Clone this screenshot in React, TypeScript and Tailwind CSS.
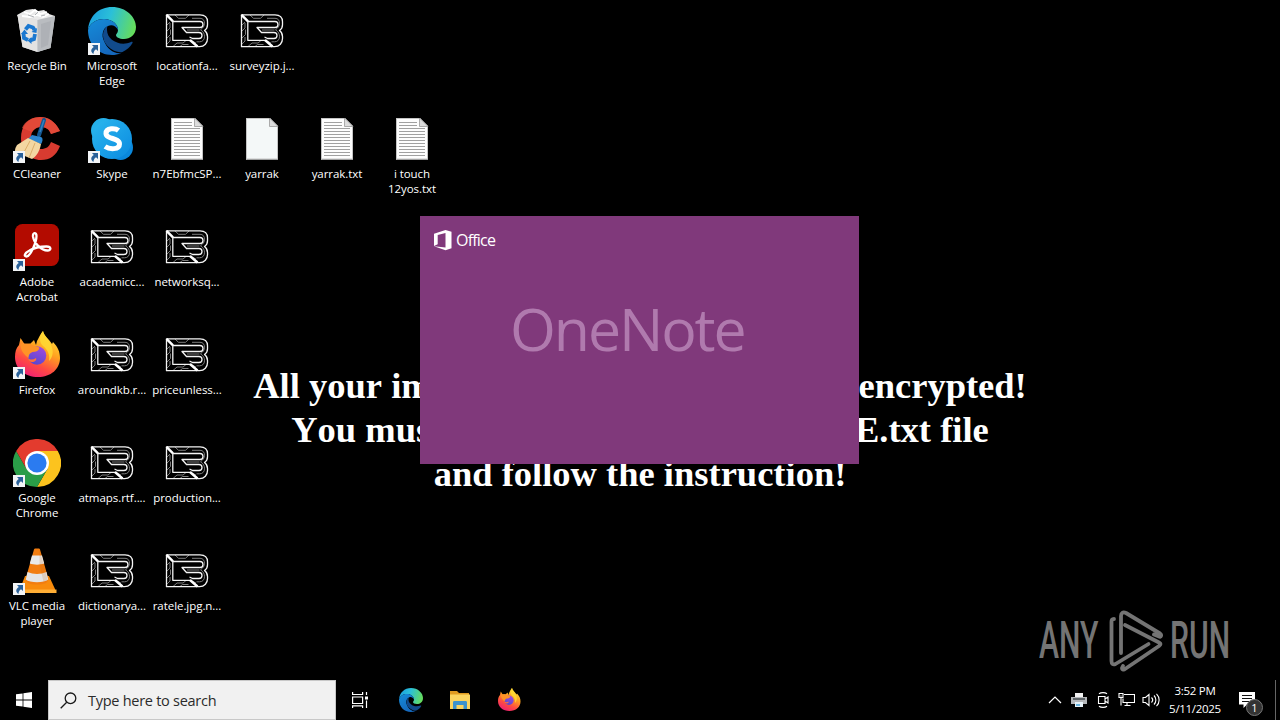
import React from "react";

type IconKind =
  | "bin" | "edge" | "lock" | "ccleaner" | "skype" | "text" | "blank"
  | "acrobat" | "firefox" | "chrome" | "vlc";

type DesktopItem = {
  icon: IconKind;
  label: string[];
  shortcut?: boolean;
};

const rows: DesktopItem[][] = [
  [
    { icon: "bin", label: ["Recycle Bin"] },
    { icon: "edge", label: ["Microsoft", "Edge"], shortcut: true },
    { icon: "lock", label: ["locationfa..."] },
    { icon: "lock", label: ["surveyzip.j..."] },
  ],
  [
    { icon: "ccleaner", label: ["CCleaner"], shortcut: true },
    { icon: "skype", label: ["Skype"], shortcut: true },
    { icon: "text", label: ["n7EbfmcSP..."] },
    { icon: "blank", label: ["yarrak"] },
    { icon: "text", label: ["yarrak.txt"] },
    { icon: "text", label: ["i touch", "12yos.txt"] },
  ],
  [
    { icon: "acrobat", label: ["Adobe", "Acrobat"], shortcut: true },
    { icon: "lock", label: ["academicc..."] },
    { icon: "lock", label: ["networksq..."] },
  ],
  [
    { icon: "firefox", label: ["Firefox"], shortcut: true },
    { icon: "lock", label: ["aroundkb.r..."] },
    { icon: "lock", label: ["priceunless..."] },
  ],
  [
    { icon: "chrome", label: ["Google", "Chrome"], shortcut: true },
    { icon: "lock", label: ["atmaps.rtf...."] },
    { icon: "lock", label: ["production..."] },
  ],
  [
    { icon: "vlc", label: ["VLC media", "player"], shortcut: true },
    { icon: "lock", label: ["dictionarya..."] },
    { icon: "lock", label: ["ratele.jpg.n..."] },
  ],
];

const BinIcon = () => (
  <svg viewBox="0 0 48 48" className="size-12">
    <path d="M4 8l9-5 7-1 5 2 6-1 5 4 6 2-4 6H8z" fill="#e9e9e9" />
    <path d="M4.500 8l20 5 17.500-4-4.500 32-13 4-15-5z" fill="#d3d6d9" />
    <path d="M4.500 8l20 5v32l-15-5z" fill="#e4e3e2" />
    <path d="M24.500 13L42 9l-4.500 32-13 4z" fill="#b9bcc0" />
    <path d="M28 17l10-3-3 24-7 3z" fill="#a6aaaf" opacity=".6" />
    <path d="M11 5l6 2 5-4 5 4 7-2M9 9l8 1 7-2 6 2 6-3" fill="none" stroke="#fff" strokeWidth="1.800" />
    <path d="M15 8l6 2M25 5l-3 3M32 8l-4 1" stroke="#aeb1b5" />
    <path d="M12.500 22.500l3-3.500 4.500 1.500 1.500 2.500M10.500 26l.5 5 4 2M22 27l-1 5-4 1.500" fill="none" stroke="#1b78d0" strokeWidth="3.800" />
    <path d="M18.500 25l5 1 .5-5zM8 27l3.500-4.500L15 27zM18.500 30v7l-4-3.500z" fill="#1b78d0" />
  </svg>
);

const EdgeIcon = ({ className }: { className: string }) => (
  <svg viewBox="0 0 48 48" className={className}>
    <defs>
      <linearGradient id="edgeTop" x1="0" y1=".3" x2="1" y2=".5">
        <stop offset="0" stopColor="#1a9fe0" />
        <stop offset=".45" stopColor="#2bc0d8" />
        <stop offset="1" stopColor="#66dd5c" />
      </linearGradient>
      <linearGradient id="edgeLeft" x1="0" y1="0" x2=".5" y2="1">
        <stop offset="0" stopColor="#158cd9" />
        <stop offset="1" stopColor="#1568bd" />
      </linearGradient>
    </defs>
    <path d="M0 23C1 9 11 0 24 0c14 0 24 10 24 20 0 8-6 12-12 12-5 0-8-2-8-4 0-1 2-2 2-5 0-6-6-11-14-11C8 12 2 16 0 23z" fill="url(#edgeTop)" />
    <path d="M0 23C2 16 8 12 16 12c8 0 14 5 14 11-2-4-6-6-10-4-5 2-7 9-4 15 3 8 10 13 17 12-3 1.500-6 2-9 2C10 48 0 37 0 23z" fill="url(#edgeLeft)" />
    <path d="M19.500 19c-6 4-6 14 0 20 5 5 11 7 15 6 4-2 8-5 10-9 .5-1-.5-1.500-1.500-1C32 40 19 33 19 23c0-1.500 0-2.500.5-4z" fill="#114a8b" />
  </svg>
);

const FirefoxIcon = ({ className }: { className: string }) => (
  <svg viewBox="0 0 48 48" className={className}>
    <defs>
      <linearGradient id="foxBody" x1=".8" y1="0" x2=".3" y2="1">
        <stop offset="0" stopColor="#ffe843" />
        <stop offset=".4" stopColor="#ffa21f" />
        <stop offset=".72" stopColor="#ff4a42" />
        <stop offset="1" stopColor="#ee1f74" />
      </linearGradient>
      <linearGradient id="foxGlobe" x1=".7" y1="0" x2=".3" y2="1">
        <stop offset="0" stopColor="#a04adf" />
        <stop offset="1" stopColor="#5547cf" />
      </linearGradient>
    </defs>
    <path d="M30 0c1 5 6 8 9 13l1-2c5 5 7 10 7 16 0 11-9 19-22 19S2 38 2 26c0-5 1-9 4-12L7.500 7l4 6c2-.5 4-.8 6-.5L21 9l2 5 1-4c2-3 3-7 6-10z" fill="url(#foxBody)" />
    <circle cx="24" cy="24.500" r="9.300" fill="url(#foxGlobe)" />
    <path d="M7.500 13c5-1 10 0 14 2 2 0 4 1 5 2-1 3-4 4-7 4-3 1-4 3-4 6-4-3-8-7-8-14z" fill="#ff9326" />
    <path d="M15 27c2 2 5 2 8 0 1 2-1 4-4 4-2 0-4-2-4-4z" fill="#ff7139" />
    <path d="M30 0c1 5 6 8 8 14 3 6 2 12-2 16 1-6-1-11-6-15-4-4-4-10 0-15z" fill="#ffd832" opacity=".85" />
  </svg>
);

// maze-like "B" used for every encrypted file
const LockIcon = () => (
  <svg viewBox="0 0 48 48" className="size-12" fill="none">
    <g stroke="#8a8a8a" strokeWidth=".9">
      <path d="M12 8l3.500 3.300h7L26 8M29 11.300h8c3 0 4.500 2 4.500 5 0 3-1.500 4.500-4 6.500 3 2 4 4 4 7 0 3-2 5-5 5h-3" />
      <path d="M4 18l3-3M4 24l3-3v-5M4 31l3.500-3.500v-5M7 30v4l-3 3M10 39.500l4-3.500h6l3-2.500M17 39.500l2.500-2h6" />
      <path d="M24 23h12.500M30 34.500l3 1.500" />
    </g>
    <g stroke="#f4f4f4" strokeWidth="1.300" strokeLinejoin="round">
      <path d="M3.500 7.800H37c5 0 7.500 3 7.500 7v3c0 2.500-1 4.500-3 5.700 2 1.500 3 3.200 3 6v2c0 4.500-3 8.200-8 8.200h-33z" />
      <path d="M37 14.500H9.800v18.800h17.500M37 14.500c4 0 4 6 0 6H19l4.500 5H36c4 0 4 6 0 6h-6.500l-3-1.500" />
    </g>
    <path d="M3.500 7.800l6.500 6.500M27 33l7.500 6.500" stroke="#fff" strokeWidth="2.400" />
  </svg>
);

const CCleanerIcon = () => (
  <svg viewBox="0 0 48 48" className="size-12">
    <path d="M47 16C42 6 35 2 27 2 15 2 8 11 8 23s8 22 20 22c9 0 15-4 19-14l-9-4c-2 5-5 7-10 7-6 0-10-4-10-11s4-11 10-11c5 0 8 2 10 7z" fill="#d83b30" />
    <path d="M27 2c8 0 15 4 20 14l-9 3c-2-5-5-7-10-7-4 0-7 2-9 5L9 13c3-7 10-11 18-11z" fill="#e8503c" opacity=".7" />
    <path d="M31 5l-5 15" stroke="#155791" strokeWidth="4" strokeLinecap="round" />
    <path d="M31 5l-4 12" stroke="#2f82c2" strokeWidth="1.500" />
    <path d="M19 20l9 2c2 1 2 4 0 7l-13-5z" fill="#2d86cf" />
    <path d="M15 23l13 6c-1 6-4 12-9 15L2 37c0-4 1-5 2-7z" fill="#f3d7a2" />
    <path d="M17 26l-7 13M22 28l-6 15" stroke="#dbae6a" />
  </svg>
);

const SkypeIcon = () => (
  <svg viewBox="0 0 48 48" className="size-12">
    <defs>
      <linearGradient id="sky" x1="0" y1="0" x2="1" y2="1">
        <stop offset="0" stopColor="#2cb8ee" />
        <stop offset="1" stopColor="#0a8ae0" />
      </linearGradient>
    </defs>
    <circle cx="15.500" cy="15.500" r="12.500" fill="#25b0ea" />
    <circle cx="32.500" cy="32.500" r="12.500" fill="#0a88dc" />
    <circle cx="24" cy="24" r="20" fill="url(#sky)" />
    <path d="M30.500 15.500c-3-2.500-12.500-3-12.500 3 0 6 13.500 4 13.500 10.500 0 6-10 5.500-14.500 2.500" fill="none" stroke="#fff" strokeWidth="5" />
  </svg>
);

const PageIcon = ({ lines }: { lines: boolean }) => (
  <svg viewBox="0 0 48 48" className="size-12">
    <path d="M8 3h24l8 8v33.500H8z" fill={lines ? "#fdfdfd" : "#f4f8f8"} />
    <path d="M8 3.500h24M8.500 3v41.500M8 44h32M39.500 11v33" stroke="#c4c4c4" fill="none" />
    <path d="M31.500 3v8.500H40z" fill="#dcdcdc" stroke="#999" strokeWidth=".8" />
    {lines && (
      <path
        d="M11 7.500h18M11 10.500h18M11 13.500h26M11 16.500h26M11 19.500h26M11 22.500h26M11 25.500h26M11 28.500h26M11 31.500h26M11 34.500h26M11 37.500h26M11 40.500h26"
        stroke="#a0a0a0"
      />
    )}
  </svg>
);

const AcrobatIcon = () => (
  <svg viewBox="0 0 48 48" className="size-12">
    <rect x="2" y="1" width="44" height="42" rx="7.500" fill="#b30b00" />
    <path
      d="M13.500 33.500c-3 0-2-3.500 3-6 5-3 12-4 17-4 5 0 5 4 1 4-6 0-13.500-7-14.500-14-.5-4.500 3.500-4.500 3.500-.5 0 6-6 20.500-10 20.500z"
      fill="none" stroke="#fff" strokeWidth="2.300"
    />
  </svg>
);

const ChromeIcon = () => (
  <svg viewBox="0 0 48 48" className="size-12">
    <path d="M24 12h20.800A24 24 0 0 1 24 48l10.400-18z" fill="#fcc31e" />
    <path d="M34.400 30L24 48A24 24 0 0 1 3.200 12l10.400 18z" fill="#2a9d48" />
    <path d="M3.200 12A24 24 0 0 1 44.800 12H24L13.600 30z" fill="#e33b2e" />
    <circle cx="24" cy="24" r="12" fill="#fff" />
    <circle cx="24" cy="24" r="9.600" fill="#2b7bf0" />
  </svg>
);

const VlcIcon = () => (
  <svg viewBox="0 0 48 48" className="size-12">
    <path d="M12 29h24l6 13v3H7v-3z" fill="#f88b0c" />
    <path d="M7 42.500h36.500V46H7z" fill="#ffae35" />
    <path d="M22.500 1.500h3c1 0 1.500.5 1.800 2l7.700 27c1 6-4 7-11 7s-12-1-11-7l7.700-27c.3-1.500.8-2 1.800-2z" fill="#f27d10" />
    <path d="M19 8.500h10l2.200 8c-4 1.500-10.400 1.500-14.400 0z" fill="#e9e9e9" />
    <path d="M14.500 25c6 2.500 13 2.500 19 0l1.700 7.500c-4 3.500-18.400 3.500-22.400 0z" fill="#e4e4e4" />
    <path d="M26.500 3l6 21 2 9-4 2-4-18z" fill="#bb5d0c" opacity=".18" />
  </svg>
);

const Icon = ({ kind }: { kind: IconKind }) => {
  switch (kind) {
    case "bin": return <BinIcon />;
    case "edge": return <EdgeIcon className="size-12" />;
    case "lock": return <LockIcon />;
    case "ccleaner": return <CCleanerIcon />;
    case "skype": return <SkypeIcon />;
    case "text": return <PageIcon lines />;
    case "blank": return <PageIcon lines={false} />;
    case "acrobat": return <AcrobatIcon />;
    case "firefox": return <FirefoxIcon className="size-12" />;
    case "chrome": return <ChromeIcon />;
    case "vlc": return <VlcIcon />;
  }
};

const ShortcutBadge = () => (
  <svg viewBox="0 0 12 12" className="absolute bottom-0 left-0 size-3">
    <path d="M0 0h12v12H0z" fill="#f2f4f6" />
    <path d="M4 2h6v6L8 6.200C6 7.500 5.500 9 5.500 11 2.500 9 2.500 6 5.800 4z" fill="#2a6199" />
  </svg>
);

const DesktopIcon = ({ item }: { item: DesktopItem }) => (
  <div className="flex h-[108px] w-[74px] flex-col items-center pt-[7px]">
    <div className="relative size-12">
      <Icon kind={item.icon} />
      {item.shortcut && <ShortcutBadge />}
    </div>
    <div className="mt-[3px] flex flex-col items-center text-[11.5px] leading-[15px] tracking-[-0.05px] whitespace-nowrap text-white">
      {item.label.map((line) => (
        <span key={line}>{line}</span>
      ))}
    </div>
  </div>
);

const Wallpaper = () => (
  <div className="absolute inset-x-0 top-[364px] text-center font-['Liberation_Serif','Times_New_Roman',serif] text-[36.500px] leading-[44px] font-bold whitespace-nowrap text-white [font-kerning:none]">
    <p>All your important files are stolen and encrypted!</p>
    <p>You must find n7EbfmcSP.README.txt file</p>
    <p>and follow the instruction!</p>
  </div>
);

const Splash = () => (
  <div className="absolute top-[216px] left-[420px] h-[248px] w-[439px] bg-[#80397b]">
    <div className="flex items-center pt-[13px] pl-[13px]">
      <svg viewBox="0 0 20 22" className="h-[22px] w-5" fill="#fff">
        <path d="M1 4.800L12.500 1l6 1.700v16.600l-6 1.900L1 17.300l11.500 1.200V4L4.700 6v9.300L1 17z" />
      </svg>
      <span className="ml-[3px] text-[16px] leading-[22px] tracking-[-0.8px] text-white">Office</span>
    </div>
    <div className="mt-[41px] pl-[90px] text-[59px] leading-[72px] tracking-[-2.1px] text-[#b07aae]">OneNote</div>
  </div>
);

const Watermark = () => (
  <div className="absolute top-[608px] left-[1039px] flex h-[66px] items-center font-['Roboto',sans-serif] font-medium text-[#747474]">
    <span className="w-[70px] origin-left scale-x-[0.58] text-[52px] leading-none">ANY</span>
    <svg viewBox="0 0 54 62" className="h-[62px] w-[54px] shrink-0" fill="none" stroke="currentColor" strokeWidth="3.800" strokeLinejoin="round" strokeLinecap="round">
      <path d="M12 43V6c0-3 2-4.500 5-3l34 20.500c2 1.500 1 4-1 3l-5-2" />
      <path d="M5 9c-2 0-2.500 1-2.500 3v39c0 3 1.500 4 4 3l33-20" />
      <path d="M16 15l34 17.500c2 1 2 2 0 3.500L16 59c-1 1-3 1-3-1l1-2" />
    </svg>
    <span className="ml-[7px] w-[62px] origin-left scale-x-[0.58] text-[52px] leading-none">RUN</span>
  </div>
);

const TrayIcons = () => (
  <div className="flex h-10 items-center">
    <svg viewBox="0 0 14 8" className="mr-[9px] h-2 w-[14px]" fill="none" stroke="#fff" strokeWidth="1.200">
      <path d="M1 7l6-6 6 6" />
    </svg>
    <svg viewBox="0 0 16 16" className="mr-[8px] size-4">
      <path d="M4 1h8v5H4z" fill="#f2f2f2" />
      <path d="M0 5h16v7H0z" fill="#b4b7ba" />
      <path d="M2 6h12v2H2z" fill="#5e6468" />
      <path d="M4 10h8v5H4z" fill="#e7f3fa" />
      <path d="M5 12h4v2H5z" fill="#6cb6df" />
    </svg>
    <svg viewBox="0 0 16 18" className="mr-[7px] h-[18px] w-4" fill="none" stroke="#fff" strokeWidth="1.100">
      <path d="M3.500 5.500h6.500v7H3.500zM10 8l3-2v6l-3-2M4 2.800c2-1.600 6-1.600 8 0M4 15.200c2 1.600 6 1.600 8 0" />
    </svg>
    <svg viewBox="0 0 17 16" className="mr-[7px] h-4 w-[17px]" fill="none" stroke="#fff" strokeWidth="1.100">
      <path d="M6 2.500h10.500v8H5v-4M1 1.500h4v4H1zM3 5.500v8M3 3.500v1M9 10.500v3M6.500 13.500h6" />
    </svg>
    <svg viewBox="0 0 18 16" className="h-4 w-[18px]" fill="none" stroke="#fff" strokeWidth="1.100">
      <path d="M1 5.500h2.500L7 2.500v11l-3.500-3H1zM9.500 5.500c1.500 1.500 1.500 3.500 0 5M12 3.500c2.500 2.500 2.500 6.500 0 9M14.500 1.800c3.500 3.500 3.500 9 0 12.400" />
    </svg>
  </div>
);

const Taskbar = () => (
  <div className="absolute inset-x-0 bottom-0 flex h-10 bg-black">
    <div className="flex w-12 items-center justify-center">
      <svg viewBox="0 0 16 16" className="size-4" fill="#fff">
        <path d="M0 2.300l6.600-.9v6.200H0zM7.400 1.300L16 0v7.600H7.400zM0 8.400h6.600v6.200L0 13.700zM7.400 8.400H16V16l-8.600-1.300z" />
      </svg>
    </div>
    <div className="flex w-72 items-center border border-[#c8c8c8] bg-[#f1f1f1] pl-[11px]">
      <svg viewBox="0 0 17 17" className="size-[17px]" fill="none" stroke="#1a1a1a" strokeWidth="1.300">
        <circle cx="10.500" cy="6.300" r="5.300" />
        <path d="M6.700 10.200L.7 16.300" />
      </svg>
      <span className="ml-[11px] pt-[2px] text-[14.500px] tracking-[-0.27px] text-[#2b2b2b]">Type here to search</span>
    </div>
    <div className="flex w-12 items-center justify-center">
      <svg viewBox="0 0 16 16" className="size-4" fill="none" stroke="#fff" strokeWidth="1.200">
        <path d="M.6 0v2.500h10V0M.6 5h10v6.500H.6zM.6 16v-2.200h10V16M14.500 0v3M14.500 8.500V16" />
        <path d="M13 4.500h3v3h-3z" fill="#fff" stroke="none" />
      </svg>
    </div>
    <div className="ml-[3px] flex w-12 items-center justify-center">
      <EdgeIcon className="size-6" />
    </div>
    <div className="ml-px flex w-12 items-center justify-center">
      <svg viewBox="0 0 22 20" className="h-5 w-[22px]">
        <path d="M1 1h7l2 2h10v4H1z" fill="#e09b20" />
        <path d="M1 4.500h20V19H1z" fill="#fbd45f" />
        <path d="M4 19v-6.500c0-1 .5-1.500 1.500-1.500h11c1 0 1.500.5 1.500 1.500V19h-3.500v-4h-7v4z" fill="#3d93cd" />
      </svg>
    </div>
    <div className="ml-px flex w-12 items-center justify-center">
      <FirefoxIcon className="size-6" />
    </div>
    <div className="ml-auto flex">
      <TrayIcons />
      <div className="flex w-[70px] flex-col items-center pt-[2px] text-[11.500px] leading-[18px] tracking-[-0.3px] text-white">
        <span>3:52 PM</span>
        <span>5/11/2025</span>
      </div>
      <div className="relative w-[45px]">
        <svg viewBox="0 0 16 16" className="absolute top-3 left-[9px] size-4">
          <path d="M0 0h16v12.500H8L4.500 16v-3.500H0z" fill="#fff" />
          <path d="M3 3.500h10M3 6.500h10M3 9.500h7" stroke="#111" strokeWidth="1.100" />
        </svg>
        <span className="absolute top-[19px] left-[16px] flex size-[17px] items-center justify-center rounded-full border border-[#777] bg-[#333] text-[11px] leading-none text-white">
          1
        </span>
      </div>
      <div className="mr-[4px] h-10 w-px bg-[#666]" />
    </div>
  </div>
);

export default function App() {
  return (
    <div className="relative h-[720px] w-[1280px] overflow-hidden bg-black font-['Open_Sans','Noto_Sans',sans-serif]">
      <Wallpaper />
      <div className="relative flex flex-col">
        {rows.map((row, i) => (
          <div key={i} className="flex gap-px">
            {row.map((item) => (
              <DesktopIcon key={item.label.join(" ")} item={item} />
            ))}
          </div>
        ))}
      </div>
      <Splash />
      <Watermark />
      <Taskbar />
    </div>
  );
}
